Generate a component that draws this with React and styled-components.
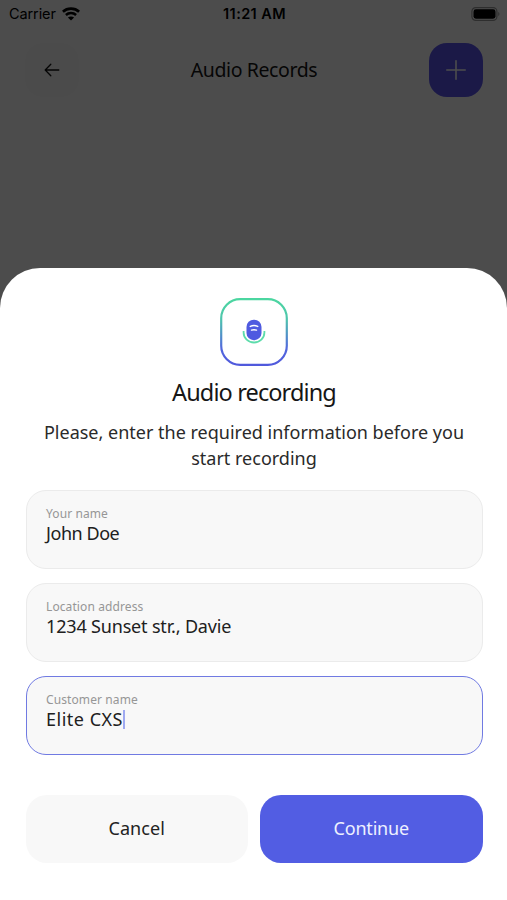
import React from "react";
import styled, { createGlobalStyle } from "styled-components";

const fields = [
  { label: "Your name", value: "John Doe", spacing: "-0.45px" },
  { label: "Location address", value: "1234 Sunset str., Davie", spacing: "-0.17px" },
  { label: "Customer name", value: "Elite CXS", spacing: "0.5px", focused: true },
];

const WifiIcon = () => (
  <svg width="18" height="14" viewBox="0 0 18 14" fill="none" stroke="#000">
    <path d="M.9 4.700C5.300.7 12.700.7 17.100 4.700" strokeWidth="2.700" />
    <path d="M3.900 8c2.900-2.700 7.300-2.700 10.200 0" strokeWidth="2.500" />
    <path d="M9 13.600 5.900 10.500c1.700-1.500 4.500-1.500 6.200 0z" fill="#000" stroke="none" />
  </svg>
);

const BatteryIcon = () => (
  <svg width="29" height="14" viewBox="0 0 29 14" fill="none">
    <rect x=".9" y=".6" width="25" height="12.800" rx="3.800" stroke="#000" strokeOpacity=".4" strokeWidth="1.200" />
    <rect x="2.500" y="2.300" width="22" height="9.400" rx="2.400" fill="#000" />
    <path d="M27.300 5v4c1.500-.6 1.500-3.400 0-4z" fill="#000" fillOpacity=".4" />
  </svg>
);

const BackIcon = () => (
  <svg width="16" height="14" viewBox="0 0 16 14" fill="none" stroke="#111" strokeWidth="1.300" strokeLinecap="round" strokeLinejoin="round">
    <path d="M14.800 7H1.300M6.800 1.300 1.200 7l5.600 5.700" />
  </svg>
);

const PlusIcon = () => (
  <svg width="20" height="20" viewBox="0 0 20 20" stroke="#fff" strokeWidth="1.600" strokeLinecap="round">
    <path d="M10 .8v18.400M.8 10h18.400" />
  </svg>
);

const MicIcon = () => (
  <svg width="68" height="68" viewBox="0 0 68 68" fill="none">
    <defs>
      <linearGradient id="frame" x1="0" y1="0" x2="0" y2="1">
        <stop offset="0" stopColor="#4bd6a0" />
        <stop offset=".3" stopColor="#4fc5ad" />
        <stop offset=".75" stopColor="#5268dd" />
        <stop offset="1" stopColor="#5059dc" />
      </linearGradient>
    </defs>
    <rect x="1.200" y="1.200" width="65.600" height="65.600" rx="19" stroke="url(#frame)" strokeWidth="2.200" />
    <path d="M23.600 33v1.500c0 5.700 4.600 10 10.400 10s10.400-4.300 10.400-10V33" stroke="#5ddcab" strokeWidth="1.800" />
    <rect x="26.500" y="21.700" width="15" height="20.500" rx="7.300" fill="#4f5ae0" />
    <path d="M30.300 28.400c2.300-1 5.100-1 7.400 0M31.500 32.100c1.600-.6 3.400-.6 5 0" stroke="#fff" strokeWidth="1.500" strokeLinecap="round" />
  </svg>
);

const Field = ({ label, value, spacing, focused }) => (
  <FieldBox $focused={focused}>
    <FieldLabel>{label}</FieldLabel>
    <FieldValue $spacing={spacing}>
      {value}
      {focused && <Caret />}
    </FieldValue>
  </FieldBox>
);

export default function App() {
  return (
    <>
      <GlobalStyle />
      <Screen>
        <StatusBar>
          <Carrier>
            Carrier
            <WifiIcon />
          </Carrier>
          <Time>11:21 AM</Time>
          <Battery>
            <BatteryIcon />
          </Battery>
        </StatusBar>
        <Header>
          <BackButton aria-label="Back">
            <BackIcon />
          </BackButton>
          <HeaderTitle>Audio Records</HeaderTitle>
          <AddButton aria-label="Add">
            <PlusIcon />
          </AddButton>
        </Header>
        <Backdrop>
          <Sheet>
            <MicIcon />
            <Title>Audio recording</Title>
            <Message>
              Please, enter the required information before you
              <br />
              start recording
            </Message>
            <Fields>
              {fields.map((field) => (
                <Field key={field.label} {...field} />
              ))}
            </Fields>
            <Actions>
              <Button>Cancel</Button>
              <Button $primary>Continue</Button>
            </Actions>
          </Sheet>
        </Backdrop>
      </Screen>
    </>
  );
}

const GlobalStyle = createGlobalStyle`
  * {
    box-sizing: border-box;
  }

  body {
    margin: 0;
    font-family: "Noto Sans", sans-serif;
  }

  button {
    font: inherit;
    border: none;
    padding: 0;
  }

  svg {
    display: block;
    flex: none;
  }
`;

const Screen = styled.div`
  position: relative;
  height: 900px;
  overflow: hidden;
  background: #fff;
`;

const StatusBar = styled.div`
  display: grid;
  grid-template-columns: 1fr auto 1fr;
  align-items: center;
  height: 27px;
  padding: 0 7px 0 9px;
  font-family: Inter, sans-serif;
  font-size: 14.5px;
  line-height: 27px;
  color: #000;
`;

const Carrier = styled.div`
  display: flex;
  align-items: center;
  gap: 6px;
  letter-spacing: -0.1px;
`;

const Time = styled.div`
  font-weight: 600;
  letter-spacing: 0.4px;
`;

const Battery = styled.div`
  display: flex;
  justify-content: flex-end;
`;

const Header = styled.div`
  display: flex;
  align-items: center;
  justify-content: space-between;
  margin-top: 16px;
  padding: 0 24px 0 25px;
`;

const BackButton = styled.button`
  display: flex;
  align-items: center;
  justify-content: center;
  width: 54px;
  height: 54px;
  border-radius: 18px;
  background: #fcfcfc;
`;

const HeaderTitle = styled.div`
  font-size: 19.5px;
  line-height: 54px;
  letter-spacing: -0.4px;
  color: #161616;
`;

const AddButton = styled(BackButton)`
  background: #5a55ed;
`;

const Backdrop = styled.div`
  position: absolute;
  inset: 0;
  display: flex;
  align-items: flex-end;
  background: rgba(0, 0, 0, 0.7);
`;

const Sheet = styled.div`
  display: flex;
  flex-direction: column;
  align-items: center;
  width: 100%;
  height: 632px;
  padding: 30px 24.5px 0 25.5px;
  border-radius: 40px 40px 0 0;
  background: #fff;
`;

const Title = styled.div`
  margin-top: 8px;
  font-size: 23.5px;
  line-height: 36px;
  letter-spacing: -0.88px;
  color: #161616;
`;

const Message = styled.div`
  margin-top: 9px;
  font-size: 18px;
  line-height: 26px;
  text-align: center;
  white-space: nowrap;
  color: #2a2a2a;
`;

const Fields = styled.div`
  display: flex;
  flex-direction: column;
  gap: 14px;
  width: 100%;
  margin-top: 19px;
`;

const FieldBox = styled.div`
  height: 79px;
  padding: 15px 19.5px 0;
  border: 1px solid ${({ $focused }) => ($focused ? "#707ae2" : "#ebebeb")};
  border-radius: 20px;
  background: #f8f8f8;
`;

const FieldLabel = styled.div`
  font-size: 12px;
  line-height: 16px;
  letter-spacing: 0.1px;
  color: #969696;
`;

const FieldValue = styled.div`
  display: flex;
  align-items: center;
  height: 22px;
  font-size: 18px;
  line-height: 22px;
  letter-spacing: ${({ $spacing }) => $spacing};
  color: #202020;
`;

const Caret = styled.span`
  width: 2px;
  height: 19px;
  background: #9fa9f1;
`;

const Actions = styled.div`
  display: grid;
  grid-template-columns: 1fr 1fr;
  gap: 12px;
  width: 100%;
  margin-top: 40px;
`;

const Button = styled.button`
  height: 68px;
  padding-bottom: 2px;
  border-radius: 21px;
  font-size: 18px;
  line-height: 66px;
  letter-spacing: ${({ $primary }) => ($primary ? "-0.2px" : "0.1px")};
  color: ${({ $primary }) => ($primary ? "#edf0ff" : "#222")};
  background: ${({ $primary }) => ($primary ? "#525de3" : "#f8f8f8")};
`;
